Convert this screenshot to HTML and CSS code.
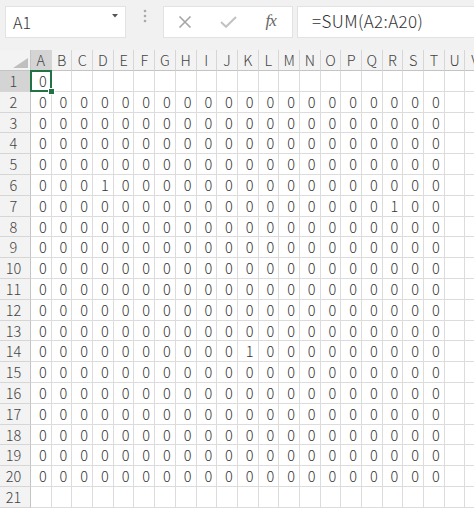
FILE: index.html
```html
<!DOCTYPE html>
<html>
<head>
<meta charset="utf-8">
<link rel="stylesheet" href="styles.css">
</head>
<body>
<div class="toolbar">
  <div class="namebox">
    <span class="name">A1</span>
    <svg class="caret" width="6" height="4" viewBox="0 0 6 4"><path d="M0 0H6L3 3.5Z" fill="#555"/></svg>
  </div>
  <div class="grip">
    <svg width="4" height="14" viewBox="0 0 4 14"><circle cx="2" cy="2" r="1.3" fill="#a9a9a9"/><circle cx="2" cy="7" r="1.3" fill="#a9a9a9"/><circle cx="2" cy="12" r="1.3" fill="#a9a9a9"/></svg>
  </div>
  <div class="actions">
    <span class="act"><svg width="14" height="12" viewBox="0 0 14 12"><path d="M1.5 0.5L12.5 11.5M12.5 0.5L1.5 11.5" stroke="#a6a6a6" stroke-width="1.6" fill="none"/></svg></span>
    <span class="act"><svg width="17" height="12" viewBox="0 0 17 12"><path d="M1 6L6 10.8L16 1" stroke="#c2c2c2" stroke-width="2" fill="none"/></svg></span>
    <span class="act fx">fx</span>
  </div>
  <div class="formula">=SUM(A2:A20)</div>
</div>
<div class="sheet">
<div class="h corner"><svg width="15" height="10" viewBox="0 0 15 10"><path d="M15 0V10H0Z" fill="#bfbfbf"/></svg></div>
<div class="h ch on">A</div><div class="h ch">B</div><div class="h ch">C</div><div class="h ch">D</div><div class="h ch">E</div><div class="h ch">F</div><div class="h ch">G</div><div class="h ch">H</div><div class="h ch">I</div><div class="h ch">J</div><div class="h ch">K</div><div class="h ch">L</div><div class="h ch">M</div><div class="h ch">N</div><div class="h ch">O</div><div class="h ch">P</div><div class="h ch">Q</div><div class="h ch">R</div><div class="h ch">S</div><div class="h ch">T</div><div class="h ch">U</div><div class="h ch">V</div>
<div class="h rh on">1</div><div class="c sel">0</div><div class="c"></div><div class="c"></div><div class="c"></div><div class="c"></div><div class="c"></div><div class="c"></div><div class="c"></div><div class="c"></div><div class="c"></div><div class="c"></div><div class="c"></div><div class="c"></div><div class="c"></div><div class="c"></div><div class="c"></div><div class="c"></div><div class="c"></div><div class="c"></div><div class="c"></div><div class="c"></div><div class="c"></div>
<div class="h rh">2</div><div class="c">0</div><div class="c">0</div><div class="c">0</div><div class="c">0</div><div class="c">0</div><div class="c">0</div><div class="c">0</div><div class="c">0</div><div class="c">0</div><div class="c">0</div><div class="c">0</div><div class="c">0</div><div class="c">0</div><div class="c">0</div><div class="c">0</div><div class="c">0</div><div class="c">0</div><div class="c">0</div><div class="c">0</div><div class="c">0</div><div class="c"></div><div class="c"></div>
<div class="h rh">3</div><div class="c">0</div><div class="c">0</div><div class="c">0</div><div class="c">0</div><div class="c">0</div><div class="c">0</div><div class="c">0</div><div class="c">0</div><div class="c">0</div><div class="c">0</div><div class="c">0</div><div class="c">0</div><div class="c">0</div><div class="c">0</div><div class="c">0</div><div class="c">0</div><div class="c">0</div><div class="c">0</div><div class="c">0</div><div class="c">0</div><div class="c"></div><div class="c"></div>
<div class="h rh">4</div><div class="c">0</div><div class="c">0</div><div class="c">0</div><div class="c">0</div><div class="c">0</div><div class="c">0</div><div class="c">0</div><div class="c">0</div><div class="c">0</div><div class="c">0</div><div class="c">0</div><div class="c">0</div><div class="c">0</div><div class="c">0</div><div class="c">0</div><div class="c">0</div><div class="c">0</div><div class="c">0</div><div class="c">0</div><div class="c">0</div><div class="c"></div><div class="c"></div>
<div class="h rh">5</div><div class="c">0</div><div class="c">0</div><div class="c">0</div><div class="c">0</div><div class="c">0</div><div class="c">0</div><div class="c">0</div><div class="c">0</div><div class="c">0</div><div class="c">0</div><div class="c">0</div><div class="c">0</div><div class="c">0</div><div class="c">0</div><div class="c">0</div><div class="c">0</div><div class="c">0</div><div class="c">0</div><div class="c">0</div><div class="c">0</div><div class="c"></div><div class="c"></div>
<div class="h rh">6</div><div class="c">0</div><div class="c">0</div><div class="c">0</div><div class="c">1</div><div class="c">0</div><div class="c">0</div><div class="c">0</div><div class="c">0</div><div class="c">0</div><div class="c">0</div><div class="c">0</div><div class="c">0</div><div class="c">0</div><div class="c">0</div><div class="c">0</div><div class="c">0</div><div class="c">0</div><div class="c">0</div><div class="c">0</div><div class="c">0</div><div class="c"></div><div class="c"></div>
<div class="h rh">7</div><div class="c">0</div><div class="c">0</div><div class="c">0</div><div class="c">0</div><div class="c">0</div><div class="c">0</div><div class="c">0</div><div class="c">0</div><div class="c">0</div><div class="c">0</div><div class="c">0</div><div class="c">0</div><div class="c">0</div><div class="c">0</div><div class="c">0</div><div class="c">0</div><div class="c">0</div><div class="c">1</div><div class="c">0</div><div class="c">0</div><div class="c"></div><div class="c"></div>
<div class="h rh">8</div><div class="c">0</div><div class="c">0</div><div class="c">0</div><div class="c">0</div><div class="c">0</div><div class="c">0</div><div class="c">0</div><div class="c">0</div><div class="c">0</div><div class="c">0</div><div class="c">0</div><div class="c">0</div><div class="c">0</div><div class="c">0</div><div class="c">0</div><div class="c">0</div><div class="c">0</div><div class="c">0</div><div class="c">0</div><div class="c">0</div><div class="c"></div><div class="c"></div>
<div class="h rh">9</div><div class="c">0</div><div class="c">0</div><div class="c">0</div><div class="c">0</div><div class="c">0</div><div class="c">0</div><div class="c">0</div><div class="c">0</div><div class="c">0</div><div class="c">0</div><div class="c">0</div><div class="c">0</div><div class="c">0</div><div class="c">0</div><div class="c">0</div><div class="c">0</div><div class="c">0</div><div class="c">0</div><div class="c">0</div><div class="c">0</div><div class="c"></div><div class="c"></div>
<div class="h rh">10</div><div class="c">0</div><div class="c">0</div><div class="c">0</div><div class="c">0</div><div class="c">0</div><div class="c">0</div><div class="c">0</div><div class="c">0</div><div class="c">0</div><div class="c">0</div><div class="c">0</div><div class="c">0</div><div class="c">0</div><div class="c">0</div><div class="c">0</div><div class="c">0</div><div class="c">0</div><div class="c">0</div><div class="c">0</div><div class="c">0</div><div class="c"></div><div class="c"></div>
<div class="h rh">11</div><div class="c">0</div><div class="c">0</div><div class="c">0</div><div class="c">0</div><div class="c">0</div><div class="c">0</div><div class="c">0</div><div class="c">0</div><div class="c">0</div><div class="c">0</div><div class="c">0</div><div class="c">0</div><div class="c">0</div><div class="c">0</div><div class="c">0</div><div class="c">0</div><div class="c">0</div><div class="c">0</div><div class="c">0</div><div class="c">0</div><div class="c"></div><div class="c"></div>
<div class="h rh">12</div><div class="c">0</div><div class="c">0</div><div class="c">0</div><div class="c">0</div><div class="c">0</div><div class="c">0</div><div class="c">0</div><div class="c">0</div><div class="c">0</div><div class="c">0</div><div class="c">0</div><div class="c">0</div><div class="c">0</div><div class="c">0</div><div class="c">0</div><div class="c">0</div><div class="c">0</div><div class="c">0</div><div class="c">0</div><div class="c">0</div><div class="c"></div><div class="c"></div>
<div class="h rh">13</div><div class="c">0</div><div class="c">0</div><div class="c">0</div><div class="c">0</div><div class="c">0</div><div class="c">0</div><div class="c">0</div><div class="c">0</div><div class="c">0</div><div class="c">0</div><div class="c">0</div><div class="c">0</div><div class="c">0</div><div class="c">0</div><div class="c">0</div><div class="c">0</div><div class="c">0</div><div class="c">0</div><div class="c">0</div><div class="c">0</div><div class="c"></div><div class="c"></div>
<div class="h rh">14</div><div class="c">0</div><div class="c">0</div><div class="c">0</div><div class="c">0</div><div class="c">0</div><div class="c">0</div><div class="c">0</div><div class="c">0</div><div class="c">0</div><div class="c">0</div><div class="c">1</div><div class="c">0</div><div class="c">0</div><div class="c">0</div><div class="c">0</div><div class="c">0</div><div class="c">0</div><div class="c">0</div><div class="c">0</div><div class="c">0</div><div class="c"></div><div class="c"></div>
<div class="h rh">15</div><div class="c">0</div><div class="c">0</div><div class="c">0</div><div class="c">0</div><div class="c">0</div><div class="c">0</div><div class="c">0</div><div class="c">0</div><div class="c">0</div><div class="c">0</div><div class="c">0</div><div class="c">0</div><div class="c">0</div><div class="c">0</div><div class="c">0</div><div class="c">0</div><div class="c">0</div><div class="c">0</div><div class="c">0</div><div class="c">0</div><div class="c"></div><div class="c"></div>
<div class="h rh">16</div><div class="c">0</div><div class="c">0</div><div class="c">0</div><div class="c">0</div><div class="c">0</div><div class="c">0</div><div class="c">0</div><div class="c">0</div><div class="c">0</div><div class="c">0</div><div class="c">0</div><div class="c">0</div><div class="c">0</div><div class="c">0</div><div class="c">0</div><div class="c">0</div><div class="c">0</div><div class="c">0</div><div class="c">0</div><div class="c">0</div><div class="c"></div><div class="c"></div>
<div class="h rh">17</div><div class="c">0</div><div class="c">0</div><div class="c">0</div><div class="c">0</div><div class="c">0</div><div class="c">0</div><div class="c">0</div><div class="c">0</div><div class="c">0</div><div class="c">0</div><div class="c">0</div><div class="c">0</div><div class="c">0</div><div class="c">0</div><div class="c">0</div><div class="c">0</div><div class="c">0</div><div class="c">0</div><div class="c">0</div><div class="c">0</div><div class="c"></div><div class="c"></div>
<div class="h rh">18</div><div class="c">0</div><div class="c">0</div><div class="c">0</div><div class="c">0</div><div class="c">0</div><div class="c">0</div><div class="c">0</div><div class="c">0</div><div class="c">0</div><div class="c">0</div><div class="c">0</div><div class="c">0</div><div class="c">0</div><div class="c">0</div><div class="c">0</div><div class="c">0</div><div class="c">0</div><div class="c">0</div><div class="c">0</div><div class="c">0</div><div class="c"></div><div class="c"></div>
<div class="h rh">19</div><div class="c">0</div><div class="c">0</div><div class="c">0</div><div class="c">0</div><div class="c">0</div><div class="c">0</div><div class="c">0</div><div class="c">0</div><div class="c">0</div><div class="c">0</div><div class="c">0</div><div class="c">0</div><div class="c">0</div><div class="c">0</div><div class="c">0</div><div class="c">0</div><div class="c">0</div><div class="c">0</div><div class="c">0</div><div class="c">0</div><div class="c"></div><div class="c"></div>
<div class="h rh">20</div><div class="c">0</div><div class="c">0</div><div class="c">0</div><div class="c">0</div><div class="c">0</div><div class="c">0</div><div class="c">0</div><div class="c">0</div><div class="c">0</div><div class="c">0</div><div class="c">0</div><div class="c">0</div><div class="c">0</div><div class="c">0</div><div class="c">0</div><div class="c">0</div><div class="c">0</div><div class="c">0</div><div class="c">0</div><div class="c">0</div><div class="c"></div><div class="c"></div>
<div class="h rh">21</div><div class="c"></div><div class="c"></div><div class="c"></div><div class="c"></div><div class="c"></div><div class="c"></div><div class="c"></div><div class="c"></div><div class="c"></div><div class="c"></div><div class="c"></div><div class="c"></div><div class="c"></div><div class="c"></div><div class="c"></div><div class="c"></div><div class="c"></div><div class="c"></div><div class="c"></div><div class="c"></div><div class="c"></div><div class="c"></div>
</div>
</body>
</html>
```
FILE: styles.css
```css
html, body {
  margin: 0;
  padding: 0;
}
body {
  width: 474px;
  height: 510px;
  overflow: hidden;
  background: #ffffff;
  font-family: "Noto Sans CJK JP", "Noto Sans", sans-serif;
  font-weight: 300;
  color: #333;
}
.toolbar {
  height: 50px;
  box-sizing: border-box;
  padding: 6px 0 0 5px;
  background: #f1f1f1;
  display: flex;
  align-items: flex-start;
}
.namebox {
  width: 121px;
  height: 32px;
  box-sizing: border-box;
  background: #fff;
  border: 1px solid #e2e2e2;
  display: flex;
  align-items: center;
  justify-content: space-between;
  padding: 0 7px 0 7px;
}
.name {
  font-size: 16px;
  color: #333;
  line-height: 1;
}
.caret {
  margin-top: -12px;
}
.grip {
  width: 37px;
  height: 32px;
  display: flex;
  align-items: center;
  justify-content: center;
  margin-top: -6px;
}
.actions {
  width: 130px;
  height: 32px;
  box-sizing: border-box;
  background: #fff;
  border: 1px solid #e2e2e2;
  display: flex;
}
.act {
  flex: 1;
  display: flex;
  align-items: center;
  justify-content: center;
}
.fx {
  font-family: "Liberation Serif", serif;
  font-style: italic;
  font-weight: 400;
  font-size: 17px;
  color: #666;
  padding-bottom: 3px;
  letter-spacing: -1px;
}
.formula {
  flex: 1;
  height: 32px;
  box-sizing: border-box;
  margin-left: 4px;
  background: #fff;
  border: 1px solid #e2e2e2;
  border-right: none;
  font-size: 17px;
  line-height: 28px;
  padding-left: 14px;
  color: #333;
  letter-spacing: 0.4px;
}
.sheet {
  display: grid;
  grid-template-columns: 31px repeat(22, 20.7px);
  grid-template-rows: 21px repeat(21, 20.8px);
  font-size: 14.5px;
}
.c, .h {
  box-sizing: border-box;
  border-right: 1px solid #dcdcdc;
  border-bottom: 1px solid #dcdcdc;
  line-height: 19px;
  white-space: nowrap;
  overflow: hidden;
}
.c {
  text-align: right;
  padding-right: 4px;
  color: #333;
}
.h {
  background: #f3f3f3;
  color: #444;
  border-color: #d6d6d6;
}
.ch {
  text-align: center;
  border-bottom-color: #c4c4c4;
}
.rh {
  text-align: center;
  padding-right: 3px;
  border-right-color: #c4c4c4;
}
.corner {
  display: flex;
  align-items: flex-end;
  justify-content: flex-end;
  padding: 0 2px 2px 0;
  border-bottom-color: #c4c4c4;
  border-right-color: #c4c4c4;
}
.h.on {
  background: #d4d4d4;
}
.sel {
  position: relative;
  overflow: visible;
}
.sel::before {
  content: "";
  position: absolute;
  left: -1px;
  top: -1px;
  right: -1px;
  bottom: -1px;
  border: 2px solid #217346;
}
.sel::after {
  content: "";
  position: absolute;
  right: -4px;
  bottom: -4px;
  width: 5px;
  height: 5px;
  background: #217346;
  border: 1px solid #fff;
}
```
